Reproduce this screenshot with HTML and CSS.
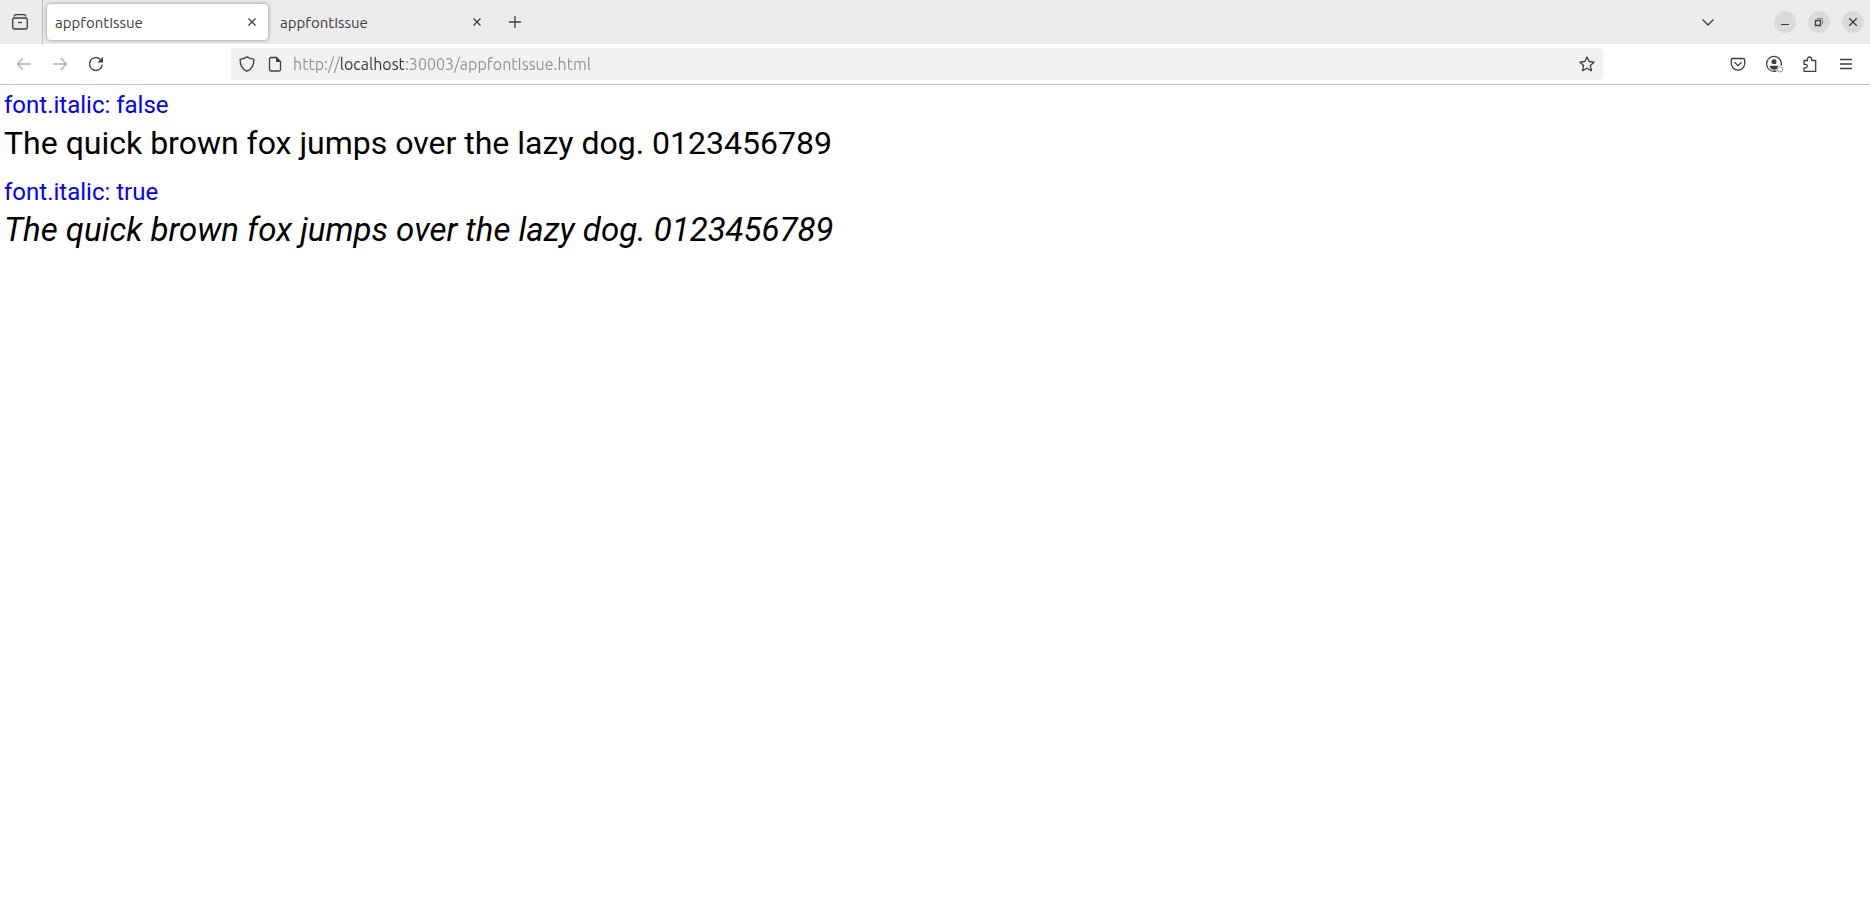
FILE: index.html
```html
<!DOCTYPE html>
<html lang="en">
<head>
  <meta charset="UTF-8">
  <meta name="viewport" content="width=device-width, initial-scale=1.0">
  <title>appfontIssue</title>
  <link rel="stylesheet" href="styles.css">
</head>
<body>
  <header>
    <div class="tabbar">
      <button class="view-button" aria-label="Firefox View">
        <svg width="18" height="18" viewBox="0 0 18 18"><path d="M3 3.500C3.300 2.200 4 1.700 5 1.700h8c1 0 1.700.5 2 1.800"/><rect x="1.700" y="5" width="14.600" height="11" rx="2"/><path d="M7 9.500h4"/></svg>
      </button>
      <div class="tabs">
        <div class="tab active">
          <a href="#">appfontIssue</a>
          <button class="tab-close" aria-label="Close tab"><svg width="10" height="10" viewBox="0 0 10 10"><path d="M1.500 1.500l7 7M8.500 1.500l-7 7"/></svg></button>
        </div>
        <div class="tab">
          <a href="#">appfontIssue</a>
          <button class="tab-close" aria-label="Close tab"><svg width="10" height="10" viewBox="0 0 10 10"><path d="M1.500 1.500l7 7M8.500 1.500l-7 7"/></svg></button>
        </div>
      </div>
      <button class="icon-button" aria-label="New tab"><svg width="12" height="12" viewBox="0 0 12 12"><path d="M6 0v12M0 6h12"/></svg></button>
      <button class="icon-button list-tabs" aria-label="List all tabs"><svg width="14" height="14" viewBox="0 0 14 14"><path d="M1.500 4.500L7 10l5.500-5.500"/></svg></button>
      <div class="window-buttons">
        <button aria-label="Minimize"><svg width="10" height="10" viewBox="0 0 10 10"><path d="M1 7.500h8" stroke-width="1"/></svg></button>
        <button aria-label="Restore"><svg width="10" height="10" viewBox="0 0 10 10"><path d="M1.500 3.500h5v5h-5z"/><path d="M3 1.500h5.500V7" stroke="#888" stroke-width="1"/></svg></button>
        <button aria-label="Close"><svg width="10" height="10" viewBox="0 0 10 10"><path d="M1.200 1.200l7.600 7.600M8.800 1.200L1.200 8.800"/></svg></button>
      </div>
    </div>

    <div class="toolbar">
      <button class="icon-button" aria-label="Back" disabled><svg width="16" height="16" viewBox="0 0 16 16"><path d="M15 8H1.500M7 2.500L1.500 8 7 13.500"/></svg></button>
      <button class="icon-button" aria-label="Forward" disabled><svg width="16" height="16" viewBox="0 0 16 16"><path d="M1 8h13.500M9 2.500L14.500 8 9 13.500"/></svg></button>
      <button class="icon-button" aria-label="Reload"><svg width="16" height="16" viewBox="0 0 16 16"><path d="M14.300 8.500A6.400 6.400 0 1 1 12.500 3.500"/><path d="M15 1v5.500H9.500z" fill="currentColor" stroke="none"/></svg></button>
      <div class="urlbar">
        <button class="url-icon" aria-label="Tracking protection"><svg width="16" height="16" viewBox="0 0 16 16"><path d="M8 .9C6 2.200 3.800 2.900 1.600 3.100c-.3 0-.5.300-.5.600 0 5.200 2 9.200 6.400 11.200a1.200 1.200 0 0 0 1 0c4.400-2 6.400-6 6.400-11.200 0-.3-.2-.6-.5-.6C12.200 2.900 10 2.200 8 .9z"/></svg></button>
        <button class="url-icon" aria-label="Site information"><svg width="16" height="16" viewBox="0 0 16 16"><path d="M9.500 1.500H4A1.500 1.500 0 0 0 2.500 3v10.500A1.500 1.500 0 0 0 4 15h8a1.500 1.500 0 0 0 1.500-1.500v-8z"/><path d="M9 1v5h5z" fill="currentColor" stroke="none"/></svg></button>
        <input type="text" aria-label="Address" value="http://localhost:30003/appfontIssue.html">
        <button class="url-icon" aria-label="Bookmark"><svg width="16" height="16" viewBox="0 0 16 16"><path d="M8 1l2.100 4.500 5 .6-3.700 3.400 1 5.200L8 12.200l-4.400 2.500 1-5.200L.9 6.100l5-.6z" stroke-linejoin="round"/></svg></button>
      </div>
      <button class="icon-button" aria-label="Pocket"><svg width="16" height="16" viewBox="0 0 16 16"><path d="M3 2.500h10A1.700 1.700 0 0 1 14.700 4.200V7.500a6.700 6.700 0 0 1-13.400 0V4.200A1.700 1.700 0 0 1 3 2.500z"/><path d="M4.500 6.300L8 9.700l3.500-3.400"/></svg></button>
      <button class="icon-button" aria-label="Account"><svg width="18" height="18" viewBox="0 0 18 18"><path d="M11.500 15.800A7.400 7.400 0 1 1 16.200 10.500"/><circle cx="9" cy="6.700" r="2.500" fill="currentColor" stroke="none"/><path d="M4.600 10.700h8.800c-.3.900-.8 1.300-1.200 2.200v1c-2 1.200-5.400 1-7-1.200z" fill="currentColor" stroke="none"/><circle cx="15" cy="14.300" r="2.500" stroke="#b4b4b4" fill="#fff"/></svg></button>
      <button class="icon-button" aria-label="Extensions"><svg width="16" height="16" viewBox="0 0 16 16"><path d="M5.500 4.500V3a2 2 0 0 1 4 0v1.500h4.200v10.800H2v-3.500h1.500a1.700 1.700 0 0 0 0-3.500H2V4.500z" stroke-linejoin="round"/></svg></button>
      <button class="icon-button" aria-label="Menu"><svg width="14" height="14" viewBox="0 0 14 14"><path d="M1 2.500h12M1 7h12M1 11.500h12"/></svg></button>
    </div>
  </header>

  <main>
    <section>
      <h2>font.italic: false</h2>
      <p>The quick brown fox jumps over the lazy dog. 0123456789</p>
    </section>
    <section>
      <h2>font.italic: true</h2>
      <p class="italic">The quick brown fox jumps over the lazy dog. 0123456789</p>
    </section>
  </main>
</body>
</html>
```
FILE: styles.css
```css
* {
  box-sizing: border-box;
}
body {
  margin: 0;
  background-color: #fff;
  color: #3d3d3d;
  font-family: Ubuntu, "Noto Sans", sans-serif;
}
button {
  display: flex;
  align-items: center;
  justify-content: center;
  padding: 0;
  border: none;
  background: none;
  color: #3d3d3d;
}
button:disabled {
  color: #b0b0b0;
}
svg {
  fill: none;
  stroke: currentColor;
  stroke-width: 1.3;
}

/* Tabs */
.tabbar {
  display: flex;
  align-items: center;
  height: 44px;
  padding-right: 6px;
  background-color: #ebebeb;
}
.view-button {
  width: 43px;
  height: 44px;
  padding-right: 2px;
  border-right: 1px solid #bdbdbd;
}
.tabs {
  display: flex;
  gap: 4px;
  padding: 0 4px;
}
.tab {
  display: flex;
  align-items: center;
  justify-content: space-between;
  width: 221px;
  height: 36px;
  padding: 0 4px 0 8px;
  border-radius: 4px;
}
.tab.active {
  background-color: #fff;
  box-shadow: 0 0 4px rgba(0, 0, 0, 0.4);
}
.tab a {
  color: #3d3d3d;
  font-size: 15px;
  text-decoration: none;
}
.tab-close {
  width: 24px;
  height: 24px;
}
.icon-button {
  width: 36px;
  height: 36px;
}
.list-tabs {
  margin-left: auto;
}
.window-buttons {
  display: flex;
  gap: 12px;
  margin-left: 48px;
}
.window-buttons button {
  width: 22px;
  height: 22px;
  border-radius: 50%;
  background-color: #dadada;
}

/* Navigation */
.toolbar {
  display: flex;
  align-items: center;
  height: 41px;
  padding: 0 6px;
  border-bottom: 1px solid #c4c4c4;
}
.urlbar {
  display: flex;
  flex: 1;
  align-items: center;
  height: 32px;
  margin: 0 117px;
  padding: 0 2px;
  border-radius: 4px;
  background-color: #f1f1f1;
}
.url-icon {
  width: 28px;
  height: 28px;
}
/* host name is darker than the rest of the address */
.urlbar input {
  flex: 1;
  min-width: 0;
  height: 28px;
  padding: 0 4px;
  border: none;
  outline: none;
  background: linear-gradient(to right, #909090 51px, #333 51px, #333 115px, #909090 115px);
  background-clip: text;
  color: transparent;
  font-family: inherit;
  font-size: 16px;
}

/* Page content */
main {
  display: flex;
  flex-direction: column;
  gap: 16px;
  padding: 6px 4px;
  font-family: Roboto, sans-serif;
}
h2 {
  margin: 0 0 5px;
  color: #00f;
  font-size: 24px;
  font-weight: 400;
  line-height: 28px;
}
p {
  margin: 0;
  color: #000;
  font-size: 32px;
  line-height: 38px;
}
.italic {
  font-size: 33px;
  font-style: italic;
}
```
